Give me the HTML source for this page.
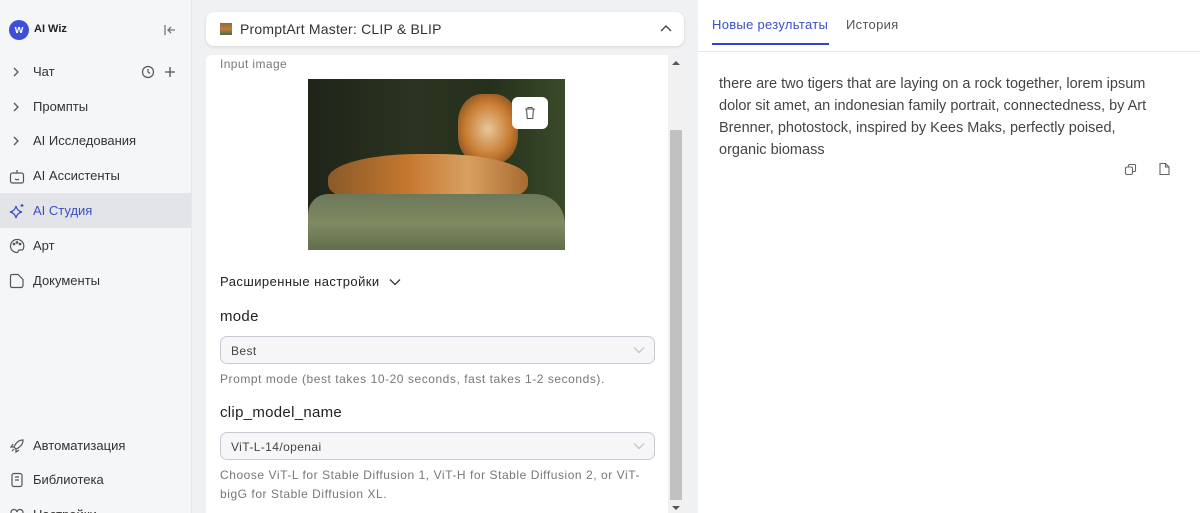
<!DOCTYPE html>
<html><head><meta charset="utf-8"><style>
*{box-sizing:border-box;margin:0;padding:0}
html,body{width:1200px;height:513px;overflow:hidden}
body{font-family:"Liberation Sans",sans-serif;background:#f0f1f3;position:relative;color:#333}
.sb{position:absolute;left:0;top:0;width:192px;height:513px;background:#f5f6f8;border-right:1px solid #e6e7ea}
.it{position:absolute;left:0;width:191px;height:35px;display:flex;align-items:center;font-size:13px;color:#333}
.it svg{position:absolute;left:9px}
.it span{position:absolute;left:33px}
.act{background:#e3e4e7;color:#3b4fc4}
.hd{position:absolute;left:206px;top:12px;width:478px;height:34px;background:#fff;border-radius:8px;box-shadow:0 1px 3px rgba(0,0,0,.12)}
.card{position:absolute;left:206px;top:55px;width:462px;height:458px;background:#fff;border-radius:6px 0 0 0}
.sc{position:absolute;left:668px;top:55px;width:16px;height:458px;background:#f1f1f1}
.rp{position:absolute;left:698px;top:0;width:502px;height:513px;background:#fff}
.sel{position:absolute;left:220px;width:435px;height:28px;border:1px solid #c9c9d3;border-radius:7px;background:#f6f6f8;font-size:12px;color:#444;padding:7px 10px;letter-spacing:.4px}
.hint{position:absolute;left:220px;font-size:12px;color:#777;line-height:19px;letter-spacing:.55px}
.lbl{position:absolute;left:220px;font-size:15px;color:#222;letter-spacing:.3px}
</style></head><body>
<div class="sb">
 <div style="position:absolute;left:9px;top:20px;width:20px;height:20px;border-radius:50%;background:#3b4fd8;color:#fff;font-size:11px;font-weight:bold;text-align:center;line-height:20px">w</div>
 <div style="position:absolute;left:34px;top:23px;font-size:11px;font-weight:bold;color:#222">AI Wiz</div>
 <svg style="position:absolute;left:163px;top:23px" width="14" height="14" viewBox="0 0 14 14" fill="none" stroke="#777" stroke-width="1.3"><path d="M2 2v10M12 7H5M8 4L5 7l3 3"/></svg>
 <div class="it" style="top:54px"><svg width="14" height="14" viewBox="0 0 14 14" fill="none" stroke="#555" stroke-width="1.3"><path d="M5 3l4 4-4 4"/></svg><span>Чат</span>
  <svg style="left:141px" width="14" height="14" viewBox="0 0 14 14" fill="none" stroke="#555" stroke-width="1.2"><circle cx="7" cy="7" r="5.5"/><path d="M7 4v3l2 1.5"/></svg>
  <svg style="left:163px" width="14" height="14" viewBox="0 0 14 14" fill="none" stroke="#555" stroke-width="1.3"><path d="M7 2v10M2 7h10"/></svg></div>
 <div class="it" style="top:89px"><svg width="14" height="14" viewBox="0 0 14 14" fill="none" stroke="#555" stroke-width="1.3"><path d="M5 3l4 4-4 4"/></svg><span>Промпты</span></div>
 <div class="it" style="top:123px"><svg width="14" height="14" viewBox="0 0 14 14" fill="none" stroke="#555" stroke-width="1.3"><path d="M5 3l4 4-4 4"/></svg><span>AI Исследования</span></div>
 <div class="it" style="top:158px"><svg width="16" height="16" viewBox="0 0 16 16" fill="none" stroke="#555" stroke-width="1.2"><rect x="1.5" y="5" width="13" height="10" rx="2"/><path d="M8 5V2M6 11q2 1.5 4 0"/></svg><span>AI Ассистенты</span></div>
 <div class="it act" style="top:193px"><svg width="16" height="16" viewBox="0 0 16 16" fill="none" stroke="#3b4fc4" stroke-width="1.2"><path d="M7 3q1 5 6 6q-5 1-6 6q-1-5-6-6q5-1 6-6z"/><path d="M13 1v3M11.5 2.5h3"/></svg><span>AI Студия</span></div>
 <div class="it" style="top:228px"><svg width="16" height="16" viewBox="0 0 16 16" fill="none" stroke="#555" stroke-width="1.2"><path d="M8 1.5a6.5 6.5 0 1 0 0 13c1.5 0 1-2 2-2.5h2.5a2 2 0 0 0 2-2A6.5 6.5 0 0 0 8 1.5z"/><circle cx="5" cy="6" r=".8"/><circle cx="8" cy="4.5" r=".8"/><circle cx="11" cy="6" r=".8"/></svg><span>Арт</span></div>
 <div class="it" style="top:263px"><svg width="16" height="16" viewBox="0 0 16 16" fill="none" stroke="#555" stroke-width="1.2"><path d="M3 1.5h6l5 5v6a2 2 0 0 1-2 2H3a1.5 1.5 0 0 1-1.5-1.5V3A1.5 1.5 0 0 1 3 1.5z"/></svg><span>Документы</span></div>
 <div class="it" style="top:428px"><svg width="16" height="16" viewBox="0 0 16 16" fill="none" stroke="#555" stroke-width="1.2"><path d="M14 2q-6 0-9 7l2 2q7-3 7-9zM5 9l-3 0 2-3M7 11v3l3-2M3 13l2-2"/></svg><span>Автоматизация</span></div>
 <div class="it" style="top:462px"><svg width="16" height="16" viewBox="0 0 16 16" fill="none" stroke="#555" stroke-width="1.2"><rect x="3" y="1.5" width="10" height="13" rx="2"/><path d="M6 5h4M6 8h4"/></svg><span>Библиотека</span></div>
 <div class="it" style="top:497px"><svg width="16" height="16" viewBox="0 0 16 16" fill="none" stroke="#555" stroke-width="1.2"><path d="M8 14s-6-3.5-6-8a3 3 0 0 1 6-1 3 3 0 0 1 6 1c0 4.5-6 8-6 8z"/></svg><span>Настройки</span></div>
</div>
<div class="hd">
 <div style="position:absolute;left:14px;top:11px;width:12px;height:12px;background:linear-gradient(#8a6a3a,#c47a3a 50%,#4a6a4a)"></div>
 <div style="position:absolute;left:34px;top:9px;font-size:14px;color:#333;letter-spacing:.2px">PromptArt Master: CLIP &amp; BLIP</div>
 <svg style="position:absolute;left:454px;top:12px" width="12" height="10" viewBox="0 0 12 10" fill="none" stroke="#444" stroke-width="1.4"><path d="M1 7l5-5 5 5"/></svg>
</div>
<div class="card"></div>
<div class="sc"><div style="position:absolute;left:2px;top:75px;width:12px;height:370px;background:#c1c1c1"></div>
 <div style="position:absolute;left:4px;top:6px;border:4px solid transparent;border-bottom:4px solid #555;border-top:none"></div>
 <div style="position:absolute;left:4px;top:451px;border:4px solid transparent;border-top:4px solid #555;border-bottom:none"></div></div>
<div style="position:absolute;left:220px;top:57px;font-size:12px;color:#777;letter-spacing:.4px">Input image</div>
<div style="position:absolute;left:308px;top:79px;width:257px;height:171px;overflow:hidden;background:linear-gradient(90deg,#1e2418,#2c3320 40%,#25301c 70%,#3a4a28)">
 <div style="position:absolute;left:150px;top:15px;width:60px;height:70px;border-radius:40%;background:radial-gradient(#e8c79a,#c77a30 55%,#5a3a18)"></div>
 <div style="position:absolute;left:20px;top:75px;width:200px;height:55px;border-radius:45%;background:linear-gradient(90deg,#8a5a28,#c5772f 40%,#d8a060 70%,#a86a30)"></div>
 <div style="position:absolute;left:0;top:115px;width:257px;height:60px;background:linear-gradient(#6c7858,#7f8a62 50%,#5d6a48);border-radius:20px 30px 0 0"></div>
 <div style="position:absolute;left:204px;top:18px;width:36px;height:32px;background:#fff;border-radius:6px"></div>
 <svg style="position:absolute;left:215px;top:27px" width="14" height="14" viewBox="0 0 14 14" fill="none" stroke="#555" stroke-width="1.1"><path d="M2 3h10M5 3V1.5h4V3M3.5 3l.8 9.5h5.4l.8-9.5"/></svg>
</div>
<div style="position:absolute;left:220px;top:274px;font-size:13px;color:#222;letter-spacing:.45px">Расширенные настройки</div>
<svg style="position:absolute;left:389px;top:278px" width="12" height="8" viewBox="0 0 12 8" fill="none" stroke="#333" stroke-width="1.3"><path d="M1 1.5l5 5 5-5"/></svg>
<div class="lbl" style="top:308px">mode</div>
<div class="sel" style="top:336px">Best</div>
<svg style="position:absolute;left:633px;top:346px" width="12" height="8" viewBox="0 0 12 8" fill="none" stroke="#bbb" stroke-width="1"><path d="M1 1.5l5 5 5-5"/></svg>
<div class="hint" style="top:370px">Prompt mode (best takes 10-20 seconds, fast takes 1-2 seconds).</div>
<div class="lbl" style="top:404px">clip_model_name</div>
<div class="sel" style="top:432px">ViT-L-14/openai</div>
<svg style="position:absolute;left:633px;top:442px" width="12" height="8" viewBox="0 0 12 8" fill="none" stroke="#bbb" stroke-width="1"><path d="M1 1.5l5 5 5-5"/></svg>
<div class="hint" style="top:466px;width:440px">Choose ViT-L for Stable Diffusion 1, ViT-H for Stable Diffusion 2, or ViT-bigG for Stable Diffusion XL.</div>
<div class="rp">
 <div style="position:absolute;left:14px;top:17px;font-size:13px;color:#3b4fc4;letter-spacing:.3px">Новые результаты</div>
 <div style="position:absolute;left:14px;top:43px;width:117px;height:2px;background:#2f45c8"></div>
 <div style="position:absolute;left:148px;top:17px;font-size:13px;color:#555;letter-spacing:.3px">История</div>
 <div style="position:absolute;left:0;top:51px;width:502px;height:1px;background:#e6e7ea"></div>
 <div style="position:absolute;left:21px;top:73px;width:440px;font-size:14.5px;line-height:22px;color:#444">there are two tigers that are laying on a rock together, lorem ipsum dolor sit amet, an indonesian family portrait, connectedness, by Art Brenner, photostock, inspired by Kees Maks, perfectly poised, organic biomass</div>
 <svg style="position:absolute;left:426px;top:163px" width="13" height="13" viewBox="0 0 13 13" fill="none" stroke="#666" stroke-width="1.1"><rect x="1.5" y="4" width="7" height="7.5" rx="1.5"/><path d="M4.5 4V2.5a1 1 0 0 1 1-1h5a1 1 0 0 1 1 1v5a1 1 0 0 1-1 1H8.5"/></svg>
 <svg style="position:absolute;left:460px;top:162px" width="13" height="14" viewBox="0 0 13 14" fill="none" stroke="#666" stroke-width="1.1"><path d="M2 1.5h5.5l3.5 3.5v7.5H2z M7.5 1.5V5H11"/></svg>
</div>
</body></html>
